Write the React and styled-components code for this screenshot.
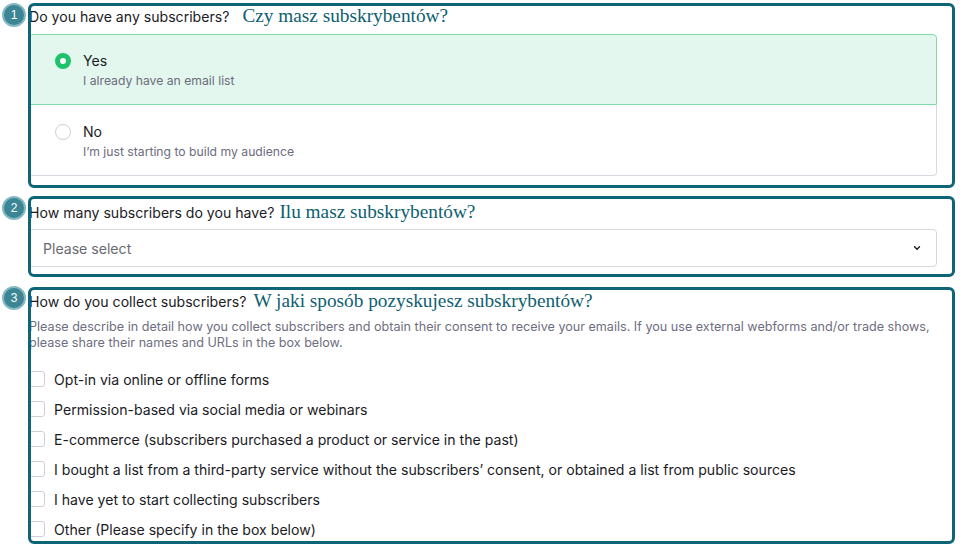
import React from 'react';
import styled, { createGlobalStyle } from 'styled-components';

const GlobalStyle = createGlobalStyle`
  html, body {
    margin: 0;
    padding: 0;
    background: #ffffff;
  }
  body {
    font-family: Inter, "Noto Sans", "Liberation Sans", sans-serif;
    color: #1b1b1f;
  }
`;

const Page = styled.div`
  width: 966px;
  height: 553px;
  box-sizing: border-box;
  padding: 3px 11px 0 2px;
  display: flex;
  flex-direction: column;
`;

const Section = styled.div`
  display: flex;
  align-items: flex-start;
  margin-top: ${p => p.$top || 0}px;
`;

const Badge = styled.div`
  width: 24px;
  height: 24px;
  flex: none;
  box-sizing: border-box;
  border-radius: 50%;
  margin-top: ${p => p.$offset || 0}px;
  margin-right: 2px;
  background: #3b8595;
  border: 2px solid #86b8c2;
  color: #ffffff;
  font-size: 12px;
  font-family: "Liberation Sans", Arial, sans-serif;
  display: flex;
  align-items: center;
  justify-content: center;
  position: relative;
  z-index: 1;
`;

const Box = styled.div`
  flex: 1;
  height: ${p => p.$height}px;
  box-sizing: border-box;
  border: 3px solid #0f6578;
  border-radius: 6px;
  padding: ${p => p.$padTop || 0}px 15px 0 0;
  overflow: hidden;
`;

const Content = styled.div`
  margin-left: -2px;
  display: flex;
  flex-direction: column;
`;

const LabelRow = styled.div`
  display: flex;
  align-items: center;
  height: 20px;
  white-space: nowrap;
`;

const Label = styled.span`
  font-size: 14.1px;
  color: #1b1b1f;
`;

const Translation = styled.span`
  font-family: "Liberation Serif", "Times New Roman", serif;
  font-size: 19.3px;
  color: #0d6070;
  margin-left: ${p => p.$gap}px;
`;

const Options = styled.div`
  margin-top: 8px;
  display: flex;
  flex-direction: column;
`;

const Option = styled.div`
  display: flex;
  align-items: flex-start;
  gap: 12px;
  padding: ${p => (p.$selected ? '16px 25px 15px' : '17px 25px 15px')};
  background: ${p => (p.$selected ? '#e3f7ee' : '#ffffff')};
  border: 1px solid ${p => (p.$selected ? '#7fdcab' : '#d9d9e2')};
  border-top-width: ${p => (p.$selected ? '1px' : '0')};
  border-radius: ${p => (p.$selected ? '4px 4px 0 0' : '0 0 4px 4px')};
`;

const Radio = styled.span`
  width: 16px;
  height: 16px;
  margin-top: 2px;
  flex: none;
  box-sizing: border-box;
  border-radius: 50%;
  background: #ffffff;
  border: ${p => (p.$checked ? '5px solid #1ec36c' : '1px solid #cfcfd8')};
`;

const OptionText = styled.div`
  display: flex;
  flex-direction: column;
  gap: 2px;
`;

const OptionTitle = styled.span`
  font-size: 14.1px;
  line-height: 20px;
  color: #1b1b1f;
`;

const OptionHint = styled.span`
  font-size: 12.2px;
  line-height: 16px;
  color: #6c6c7c;
`;

const Select = styled.div`
  margin-top: 7px;
  height: 38px;
  box-sizing: border-box;
  border: 1px solid #d7d7e0;
  border-radius: 4px;
  padding: 0 14px 0 13px;
  display: flex;
  align-items: center;
  justify-content: space-between;
  font-size: 14.1px;
  color: #6a6a72;
`;

const Description = styled.p`
  margin: 8px 0 0;
  font-size: 12.6px;
  line-height: 16px;
  color: #6e6e80;
  white-space: nowrap;
`;

const Checks = styled.div`
  margin-top: 18px;
  display: flex;
  flex-direction: column;
  gap: 10px;
`;

const CheckRow = styled.label`
  display: flex;
  align-items: center;
  gap: 9px;
  height: 20px;
  font-size: 14.1px;
  color: #1b1b1f;
  white-space: nowrap;
`;

const CheckBox = styled.span`
  width: 16px;
  height: 16px;
  flex: none;
  box-sizing: border-box;
  border: 1px solid #cfcfd8;
  border-radius: 3px;
  background: #ffffff;
`;

const Chevron = () => (
  <svg width="10" height="10" viewBox="0 0 10 10" fill="none">
    <path d="M2.5 3.8 L5 6.2 L7.5 3.8" stroke="#1b1b1f" strokeWidth="1.4" strokeLinecap="round" strokeLinejoin="round" />
  </svg>
);

const collectOptions = [
  'Opt-in via online or offline forms',
  'Permission-based via social media or webinars',
  'E-commerce (subscribers purchased a product or service in the past)',
  'I bought a list from a third-party service without the subscribers’ consent, or obtained a list from public sources',
  'I have yet to start collecting subscribers',
  'Other (Please specify in the box below)',
];

const App = () => {
  return (
    <>
      <GlobalStyle />
      <Page>
        <Section>
          <Badge>1</Badge>
          <Box $height={185}>
            <Content>
              <LabelRow>
                <Label>Do you have any subscribers?</Label>
                <Translation $gap={13}>Czy masz subskrybentów?</Translation>
              </LabelRow>
              <Options>
                <Option $selected>
                  <Radio $checked />
                  <OptionText>
                    <OptionTitle>Yes</OptionTitle>
                    <OptionHint>I already have an email list</OptionHint>
                  </OptionText>
                </Option>
                <Option>
                  <Radio />
                  <OptionText>
                    <OptionTitle>No</OptionTitle>
                    <OptionHint>I’m just starting to build my audience</OptionHint>
                  </OptionText>
                </Option>
              </Options>
            </Content>
          </Box>
        </Section>

        <Section $top={8}>
          <Badge>2</Badge>
          <Box $height={81} $padTop={3}>
            <Content>
              <LabelRow>
                <Label>How many subscribers do you have?</Label>
                <Translation $gap={5}>Ilu masz subskrybentów?</Translation>
              </LabelRow>
              <Select>
                <span>Please select</span>
                <Chevron />
              </Select>
            </Content>
          </Box>
        </Section>

        <Section $top={10}>
          <Badge $offset={-1}>3</Badge>
          <Box $height={257} $padTop={1}>
            <Content>
              <LabelRow>
                <Label>How do you collect subscribers?</Label>
                <Translation $gap={7}>W jaki sposób pozyskujesz subskrybentów?</Translation>
              </LabelRow>
              <Description>
                Please describe in detail how you collect subscribers and obtain their consent to receive your emails. If you use external webforms and/or trade shows,
                <br />
                please share their names and URLs in the box below.
              </Description>
              <Checks>
                {collectOptions.map(text => (
                  <CheckRow key={text}>
                    <CheckBox />
                    {text}
                  </CheckRow>
                ))}
              </Checks>
            </Content>
          </Box>
        </Section>
      </Page>
    </>
  );
};

export default App;
